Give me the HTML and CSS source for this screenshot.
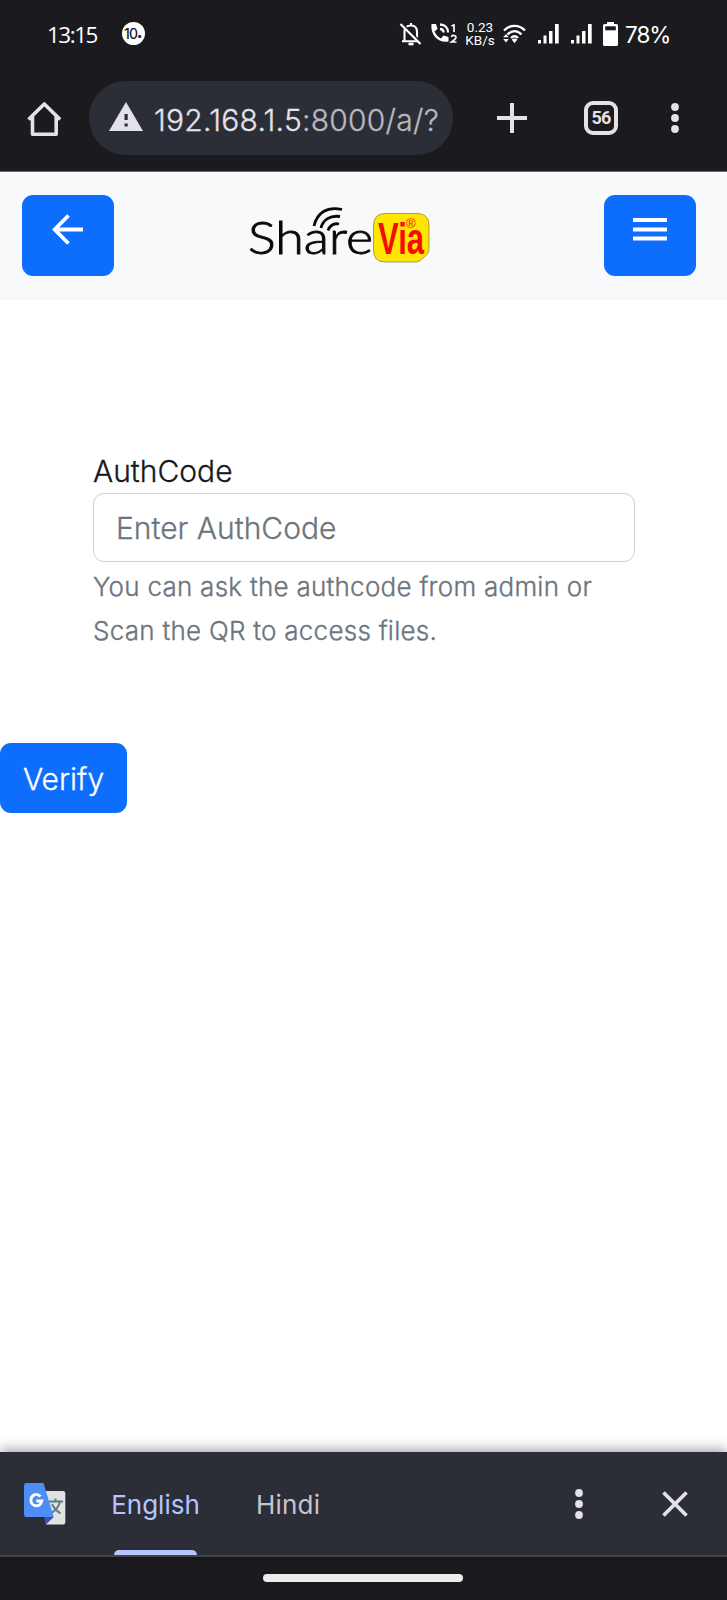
FILE: index.html
```html
<!DOCTYPE html>
<html lang="en">
<head>
<meta charset="utf-8">
<title>ShareVia</title>
<link rel="stylesheet" href="styles.css">
</head>
<body>
<div class="phone">
  <div class="status">
    <span class="clock">13:15</span>
    <span class="badge">10<b>•</b></span>
    <div class="status-icons">
      <svg width="24" height="24" viewBox="0 0 24 24" fill="none" stroke="#fff" stroke-width="2.1"><path d="M5.500 19V10C5.500 5.500 8 3.500 12 3.500S18 6 18 10v8M12 1v3M3 19.200h17" /><path d="M9.500 22h5" stroke-width="2.600"/><path d="M3.500 2 24 22.500" stroke="#1b1b1f" stroke-width="2"/><path d="M1.500 2 21.500 22"/></svg>
      <svg width="28" height="22" viewBox="0 0 28 22" fill="none" stroke="#fff"><path d="M1.500 1h4.500l1.500 5-3 2.500c1.500 3.500 3.500 5.500 6.500 7l2.500-3 5 1.500v4.500C9.500 20.500 0 13 1.500 1z" fill="#fff" stroke="none"/><path d="M10 1.500c5 0 8 3.500 8 8M10 6c2.500 0 3.500 1.500 3.500 3.500" stroke-width="2.300"/><path d="m21.500 3 2.500-1v7M21.500 14c.2-2.200 4.500-2 4.500.5 0 1.500-2 2.500-4.500 4.500h5" stroke-width="1.700"/></svg>
      <div class="speed"><span>0.23</span><span>KB/s</span></div>
      <svg width="23" height="20" viewBox="0 0 23 20" fill="none" stroke="#fff" stroke-width="2.300"><path d="M1 6.500c6-6.200 15-6.200 21 0M4.500 10.500c4.500-4.500 9.500-4.500 14 0M8 14c2.500-2.400 4.500-2.400 7 0"/><path d="m8.700 15.500 2.800 3.800 2.800-3.800c-1.500-1.500-4-1.500-5.600 0z" fill="#fff" stroke="none"/><path d="m3 10 2.800 3.200H.2zM.2 15h5.600L3 18.500z" fill="#fff" stroke="none"/></svg>
      <svg class="signal" width="21" height="20" viewBox="0 0 21 20" fill="#fff"><path d="M0 16h3v3.500H0zM5.500 11.500h3v8h-3zM11 7h3.500v12.500H11zM17 0h3.700v19.500H17z"/></svg>
      <svg class="signal" width="21" height="20" viewBox="0 0 21 20" fill="#fff"><path d="M0 16h3v3.500H0zM5.500 11.500h3v8h-3zM11 7h3.500v12.500H11zM17 0h3.700v19.500H17z"/></svg>
      <svg class="battery" width="15" height="24" viewBox="0 0 15 24"><path d="M4 0h7v2h2.500q1.500 0 1.500 1.500v19q0 1.500-1.500 1.500h-12Q0 24 0 22.500v-19Q0 2 1.500 2H4z" fill="#fff"/><path d="M2.200 4.300h10.600v4H2.200z" fill="#1b1b1f"/></svg>
    </div>
    <span class="percent">78%</span>
  </div>

  <div class="toolbar">
    <svg class="home" width="36" height="36" viewBox="0 0 36 36" fill="none" stroke="#e4e2e8" stroke-width="3.600" stroke-linejoin="round"><path d="M2.500 18.500 18.300 3l15.800 15.500M6.500 15v18.200h23.700V15"/></svg>
    <div class="omnibox">
      <svg width="34" height="29" viewBox="0 0 34 29"><path d="M17 0l17 29H0z" fill="#e4e2e8"/><path d="M15.500 12h3.200v6h-3.200zM15.500 21.500h3.200v3h-3.200z" fill="#2c2e37"/></svg>
      <div class="url">192.168.1.5<span>:8000/a/?</span></div>
    </div>
    <svg class="plus" width="30" height="30" viewBox="0 0 30 30"><path d="M15 0v30M0 15h30" stroke="#e4e2e8" stroke-width="4"/></svg>
    <div class="tabs">56</div>
    <svg class="dots" width="8" height="30" viewBox="0 0 8 30" fill="#e4e2e8"><circle cx="4" cy="4" r="3.900"/><circle cx="4" cy="15" r="3.900"/><circle cx="4" cy="26" r="3.900"/></svg>
  </div>

  <header class="header">
    <button class="square"><svg width="32" height="32" viewBox="0 0 32 32"><path d="M31 15.500H3M16.500 1.500 2.700 15.500l13.800 14" fill="none" stroke="#fff" stroke-width="3.800"/></svg></button>
    <svg class="logo" width="184" height="60" viewBox="0 0 184 60">
      <text class="share" x="-2" y="48" textLength="125" lengthAdjust="spacingAndGlyphs">Share</text>
      <g fill="none" stroke="#090909" stroke-width="2.800"><path d="M64 20C67 7 77 0 92 3.500M71 22c2-8 9-13 19-11.500M78 24.500c2-5 6-7.500 11-6.500"/></g>
      <path d="M135 7.500h32q12 0 12 12v24q0 3-2.500 5.500l-5 4.500q-2.500 2.500-5.500 2.500h-31q-11.500 0-11.500-12v-24q0-12.500 11.500-12.500z" fill="#ffe500" stroke="#8f8c45" stroke-width=".8"/>
      <text class="via" x="128" y="48" textLength="46" lengthAdjust="spacingAndGlyphs">Via</text>
      <text class="reg" x="156" y="22">®</text>
    </svg>
    <button class="square"><svg width="34" height="32" viewBox="0 0 34 32"><path d="M0 6h34M0 15.500h34M0 24.500h34" stroke="#fff" stroke-width="4"/></svg></button>
  </header>

  <main class="page">
    <div class="field">
      <label class="label" for="code">AuthCode</label>
      <input class="input" id="code" type="text" placeholder="Enter AuthCode">
      <div class="help">You can ask the authcode from admin or<br>Scan the QR to access files.</div>
    </div>
    <button class="verify">Verify</button>
  </main>

  <div class="translate">
    <svg class="gicon" width="42" height="42" viewBox="0 0 42 42">
      <path d="M17 8h22q2.300 0 2.300 2.300v29q0 2.300-2.300 2.300H22z" fill="#e1e3e1"/>
      <path d="M25 18.500h14M31.500 15.500v3M36 19c-1.500 5-5 9-9 11M28 21c2 4.500 5 7 8.500 9.500" fill="none" stroke="#5b7a82" stroke-width="1.900"/>
      <path d="M20 34h9.800L22 41.500z" fill="#3851b5"/>
      <path d="M2.300 0h17.200L29.800 34H2.300Q0 34 0 31.700V2.300Q0 0 2.300 0z" fill="#4c8df6"/>
      <path d="M16.500 13.500C12.500 9 6.900 12.500 6.900 17.200c0 6.300 9.500 8.200 10.900.8h-5.500" fill="none" stroke="#fff" stroke-width="2.900"/>
    </svg>
    <div class="lang active"><span>English</span></div>
    <div class="lang"><span>Hindi</span></div>
    <svg class="more" width="8" height="30" viewBox="0 0 8 30" fill="#e4e2e8"><circle cx="4" cy="4" r="3.900"/><circle cx="4" cy="15" r="3.900"/><circle cx="4" cy="26" r="3.900"/></svg>
    <svg class="close" width="26" height="26" viewBox="0 0 26 26"><path d="M1.500 1.500l23 23M24.500 1.500l-23 23" stroke="#e4e2e8" stroke-width="3.800"/></svg>
  </div>
  <div class="nav"><div class="pill"></div></div>
</div>
</body>
</html>
```
FILE: styles.css
```css
* { box-sizing: border-box; }
body { margin: 0; background: #fff; font-family: Inter, sans-serif; }
svg { display: block; flex: none; }
button { border: 0; padding: 0; font-family: inherit; }
.phone { width: 727px; height: 1600px; display: flex; flex-direction: column; overflow: hidden; }
.status { height: 70px; background: #1b1b1f; color: #fff; display: flex; align-items: center; padding-left: 47px; white-space: nowrap; }
.clock { width: 51px; padding-bottom: 1px; font: 400 22.500px/30px "Open Sans", sans-serif; letter-spacing: -1.500px; }
.badge { width: 23px; height: 23px; margin-left: 24px; margin-top: -3px; border-radius: 50%; background: #fff; color: #1b1b1f; font-size: 14px; line-height: 23px; letter-spacing: -.8px; padding-left: 2px; display: flex; font-weight: 500; }
.badge b { font-size: 10px; line-height: 27px; }
.status-icons { display: flex; align-items: center; margin-left: 254px; height: 70px; padding-bottom: 3px; }
.status-icons svg:nth-child(2) { margin-left: 7px; }
.speed { width: 30px; margin: 0 8px 0 7px; display: flex; flex-direction: column; align-items: center; font: 400 13.500px/13px Roboto, sans-serif; }
.signal { margin-left: 12px; }
.battery { margin-left: 11px; }
.percent { margin-left: 7px; font: 400 22.500px/30px Inter, sans-serif; letter-spacing: -1px; }
.toolbar { height: 102px; background: #1b1b1f; border-bottom: 1px solid #6b6d70; display: flex; align-items: center; padding: 0 0 5px 26px; }
.home { margin: 1px 0 0 0; }
.omnibox { width: 364px; height: 74px; margin: 0 0 0 27px; padding-left: 20px; border-radius: 37px; background: #2c2e37; display: flex; align-items: center; }
.omnibox svg { margin-top: -3px; }
.url { width: 284px; margin-left: 11px; padding-top: 4px; overflow: hidden; white-space: nowrap; font-size: 30px; line-height: 40px; font-weight: 300; letter-spacing: .25px; color: #e4e2e8; -webkit-text-stroke: .3px currentColor; }
.url span { color: #b9b8c0; }
.plus { margin-left: 44px; }
.tabs { width: 34px; height: 34px; margin-left: 57px; border: 4px solid #e4e2e8; border-radius: 9px; color: #e4e2e8; font: 700 18px/26px Roboto, sans-serif; text-align: center; letter-spacing: -.8px; }
.dots { margin-left: 53px; }
.header { height: 128px; background: #f8f9fb; display: flex; align-items: flex-start; padding: 22.500px 31px 0 22px; }
.square { width: 92px; height: 81.500px; border-radius: 11px; background: #0d6efd; display: flex; align-items: flex-start; justify-content: center; padding-top: 19px; }
.logo { margin: 11.500px 0 0 136px; overflow: visible; }
.logo + .square { margin-left: auto; }
.share { font: 300 46px Lato, sans-serif; fill: #090909; stroke: #090909; stroke-width: .9px; }
.via { font: 700 45px "Liberation Sans", sans-serif; fill: #f40b05; }
.reg { font: 400 13px "Liberation Sans", sans-serif; fill: #f40b05; }
.page { flex: 1; background: #fff; display: flex; flex-direction: column; align-items: flex-start; padding-top: 149px; }
.field { margin-left: 93px; width: 542px; display: flex; flex-direction: column; }
.label { font-size: 30px; line-height: 44px; font-weight: 300; color: #16191c; -webkit-text-stroke: .3px currentColor; }
.input { height: 69px; border: 1px solid #ced0d3; border-radius: 11px; padding: 0 22px; font: 300 30px/40px Inter, sans-serif; color: #212529; -webkit-text-stroke: .3px #6c757d; }
.input::placeholder { color: #6c757d; opacity: 1; }
.help { margin-top: 3px; font-size: 26px; line-height: 44px; font-weight: 300; letter-spacing: .26px; color: #6c757d; white-space: nowrap; -webkit-text-stroke: .35px currentColor; }
.verify { margin-top: 90px; width: 127px; height: 70px; border-radius: 11px; background: #0d6efd; color: #fff; font-size: 30px; font-weight: 300; line-height: 72px; -webkit-text-stroke: .3px currentColor; }
.translate { position: relative; height: 105px; background: #2c2e37; border-bottom: 2px solid #424349; box-shadow: 0 -2px 12px rgba(0,0,0,.4); display: flex; align-items: center; padding-left: 24px; }
.lang { height: 103px; margin-left: 46px; color: #c7c5cf; font-size: 26px; line-height: 106px; font-weight: 400; white-space: nowrap; width: 87px; }
.lang + .lang { margin-left: 57px; width: 64px; letter-spacing: .2px; }
.lang.active { color: #b5c4ff; display: flex; flex-direction: column; align-items: center; }
.lang.active span { height: 98px; }
.lang.active::after { content: ""; width: 83px; height: 5px; border-radius: 5px 5px 0 0; background: #b5c4ff; }
.more { margin-left: 255px; }
.close { margin-left: 79px; }
.nav { height: 43px; background: #1b1b1f; display: flex; justify-content: center; padding: 17px 1px 0 0; }
.pill { width: 200px; height: 8px; border-radius: 4px; background: #ececec; }
```
